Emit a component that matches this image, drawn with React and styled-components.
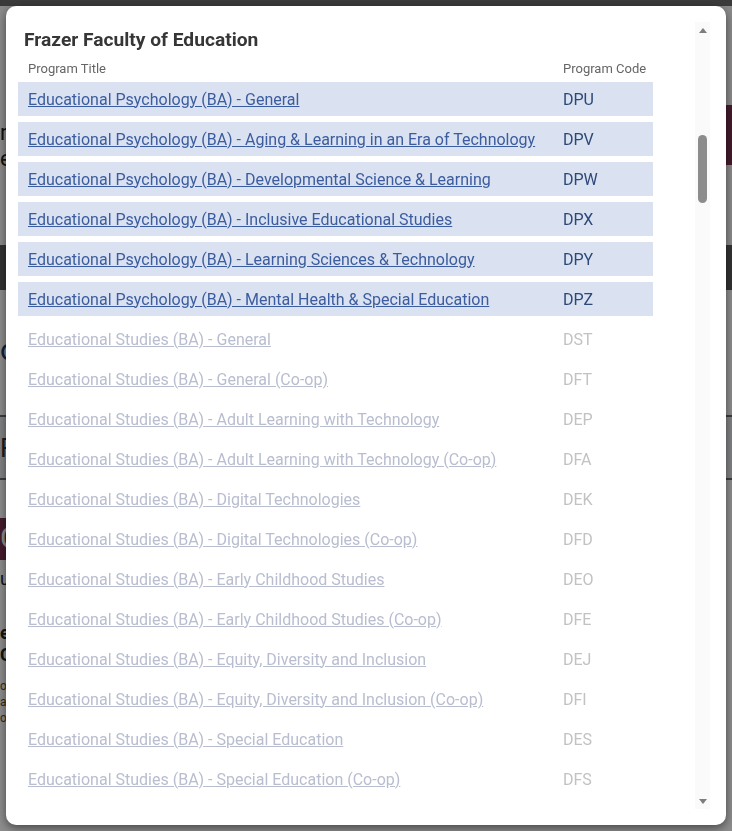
import React from "react";
import styled, { createGlobalStyle } from "styled-components";

const programs = [
  { title: "Educational Psychology (BA) - General", code: "DPU", active: true },
  { title: "Educational Psychology (BA) - Aging & Learning in an Era of Technology", code: "DPV", active: true },
  { title: "Educational Psychology (BA) - Developmental Science & Learning", code: "DPW", active: true },
  { title: "Educational Psychology (BA) - Inclusive Educational Studies", code: "DPX", active: true },
  { title: "Educational Psychology (BA) - Learning Sciences & Technology", code: "DPY", active: true },
  { title: "Educational Psychology (BA) - Mental Health & Special Education", code: "DPZ", active: true },
  { title: "Educational Studies (BA) - General", code: "DST" },
  { title: "Educational Studies (BA) - General (Co-op)", code: "DFT" },
  { title: "Educational Studies (BA) - Adult Learning with Technology", code: "DEP" },
  { title: "Educational Studies (BA) - Adult Learning with Technology (Co-op)", code: "DFA" },
  { title: "Educational Studies (BA) - Digital Technologies", code: "DEK" },
  { title: "Educational Studies (BA) - Digital Technologies (Co-op)", code: "DFD" },
  { title: "Educational Studies (BA) - Early Childhood Studies", code: "DEO" },
  { title: "Educational Studies (BA) - Early Childhood Studies (Co-op)", code: "DFE" },
  { title: "Educational Studies (BA) - Equity, Diversity and Inclusion", code: "DEJ" },
  { title: "Educational Studies (BA) - Equity, Diversity and Inclusion (Co-op)", code: "DFI" },
  { title: "Educational Studies (BA) - Special Education", code: "DES" },
  { title: "Educational Studies (BA) - Special Education (Co-op)", code: "DFS" },
];

const GlobalStyle = createGlobalStyle`
  html, body { margin: 0; padding: 0; }
  body { font-family: Roboto, "Liberation Sans", Arial, sans-serif; background: #fff; overflow: hidden; }
  * { box-sizing: border-box; }
`;

/* page behind the dialog, only slivers of it show */
const Page = styled.div`height: 100vh; display: flex; flex-direction: column; background: #fff;`;
const TopBar = styled.div`height: 6px; background: #6b6b6b;`;
const Hero = styled.div`
  height: 239px;
  display: flex;
  justify-content: space-between;
  align-items: flex-start;
  background: #fbfbfb;
`;
const HeroText = styled.div`
  margin-top: 114px;
  font-size: 22px;
  line-height: 26px;
  color: #222;
`;
const Crest = styled.div`
  margin-top: 99px;
  width: 40px;
  display: flex;
  flex-direction: column;
  align-items: flex-start;
`;
const CrestMark = styled.div`
  width: 40px;
  height: 60px;
  background: #7c3150;
  color: #fff;
  font-size: 46px;
  line-height: 60px;
  padding-left: 2px;
`;
const CrestLabel = styled.div`font-size: 11px; font-weight: 700; color: #c8862a; margin-top: 12px;`;
const NavBand = styled.div`height: 45px; background: #5c5c5c;`;
const Lead = styled.div`
  height: 125px;
  padding-top: 42px;
  font-size: 30px;
  color: #213a6a;
`;
const Notice = styled.div`
  height: 65px;
  border-top: 2px solid #6f6f6f;
  border-bottom: 2px solid #6f6f6f;
  background: #e9ecef;
  font-size: 26px;
  color: #333;
  padding-top: 16px;
`;
const Banner = styled.div`
  margin-top: 38px;
  height: 42px;
  width: 60px;
  background: #7c3150;
  color: #fff;
  font-size: 30px;
  padding-top: 2px;
`;
const SmallText = styled.div`
  font-size: ${(p) => p.$size}px;
  font-weight: ${(p) => (p.$bold ? 700 : 400)};
  line-height: ${(p) => p.$line}px;
  margin-top: ${(p) => p.$top}px;
  color: ${(p) => p.$color || "#222"};
`;

/* dialog */
const Backdrop = styled.div`
  position: fixed;
  inset: 0;
  background: rgba(0, 0, 0, 0.45);
  padding: 6px;
  display: flex;
`;
const Modal = styled.div`
  width: 720px;
  height: 819px;
  background: #fff;
  border-radius: 10px;
  box-shadow: 0 3px 10px rgba(0, 0, 0, 0.5);
  display: flex;
  padding: 16px 16px 16px 12px;
`;
const Content = styled.div`flex: 1; overflow: hidden;`;
const Heading = styled.h2`
  margin: 0;
  padding: 6px 6px 0;
  font-size: 19.2px;
  line-height: 24px;
  font-weight: 700;
  color: #363636;
`;
const Table = styled.div`display: flex; flex-direction: column; gap: 6px; margin-top: 8px;`;
const HeadRow = styled.div`
  display: grid;
  grid-template-columns: 535px 100px;
  font-size: 13px;
  line-height: 16px;
  padding-top: 1px;
  margin-bottom: -1px;
  color: #666;
`;
const Row = styled.div`
  display: grid;
  grid-template-columns: 535px 100px;
  align-items: center;
  height: 34px;
  width: 635px;
  background: ${(p) => (p.$active ? "#dae2f1" : "transparent")};
  font-size: 16px;
`;
const Cell = styled.div`padding: 0 10px; white-space: nowrap;`;
const TitleLink = styled.a`
  color: ${(p) => (p.$active ? "#3b5c9f" : "#b8bdcf")};
  text-decoration: underline;
  cursor: pointer;
`;
const Code = styled.span`color: ${(p) => (p.$active ? "#2d4877" : "#c2c2c2")};`;

const Scrollbar = styled.div`
  width: 15px;
  background: #fafafa;
  display: flex;
  flex-direction: column;
  align-items: center;
`;
const Arrow = styled.div`
  height: 16px;
  width: 15px;
  display: flex;
  align-items: center;
  justify-content: center;
`;
const Thumb = styled.div`
  margin-top: 97px;
  width: 9px;
  height: 68px;
  border-radius: 5px;
  background: #8c8c8c;
`;
const Spacer = styled.div`flex: 1;`;

const Triangle = ({ down }) => (
  <svg width="8" height="5" viewBox="0 0 8 5">
    <path d={down ? "M0 0 H8 L4 5 Z" : "M0 5 H8 L4 0 Z"} fill="#7d7d7d" />
  </svg>
);

export default function App() {
  return (
    <>
      <GlobalStyle />
      <Page>
        <TopBar />
        <Hero>
          <HeroText>
            r's
            <br />
            e
          </HeroText>
          <Crest>
            <CrestMark>&amp;</CrestMark>
            <CrestLabel>HU</CrestLabel>
          </Crest>
        </Hero>
        <NavBand />
        <Lead>oi</Lead>
        <Notice>F</Notice>
        <Banner>Cl</Banner>
        <SmallText $size={18} $line={22} $top={8}>u</SmallText>
        <SmallText $size={18} $line={22} $top={32} $bold>
          e
          <br />C
        </SmallText>
        <SmallText $size={12} $line={16} $top={12} $color="#6b4a1a">
          oc
          <br />a
          <br />o
        </SmallText>
      </Page>
      <Backdrop>
        <Modal>
          <Content>
            <Heading>Frazer Faculty of Education</Heading>
            <Table>
              <HeadRow>
                <Cell>Program Title</Cell>
                <Cell>Program Code</Cell>
              </HeadRow>
              {programs.map((p) => (
                <Row key={p.code} $active={p.active}>
                  <Cell>
                    <TitleLink $active={p.active}>{p.title}</TitleLink>
                  </Cell>
                  <Cell>
                    <Code $active={p.active}>{p.code}</Code>
                  </Cell>
                </Row>
              ))}
            </Table>
          </Content>
          <Scrollbar>
            <Arrow>
              <Triangle />
            </Arrow>
            <Thumb />
            <Spacer />
            <Arrow>
              <Triangle down />
            </Arrow>
          </Scrollbar>
        </Modal>
      </Backdrop>
    </>
  );
}
